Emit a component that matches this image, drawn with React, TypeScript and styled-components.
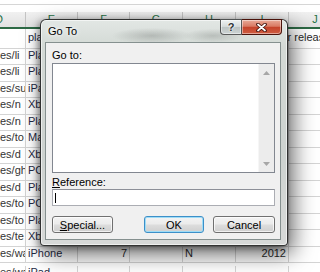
import React from "react";
import styled, { createGlobalStyle } from "styled-components";

interface SheetRow {
  a: string;
  d: string;
  e?: string;
  g?: string;
  h?: string;
  tall?: boolean;
}

const rows: SheetRow[] = [
  { a: "", d: "pla", h: "digital year released", tall: true },
  { a: "es/li", d: "PlayStation 3" },
  { a: "es/li", d: "PlayStation 3" },
  { a: "es/su", d: "iPad" },
  { a: "es/n", d: "Xbox 360" },
  { a: "es/n", d: "PlayStation 3" },
  { a: "es/to", d: "Mac" },
  { a: "es/d", d: "Xbox 360" },
  { a: "es/gh", d: "PC" },
  { a: "es/d", d: "PlayStation 3" },
  { a: "es/to", d: "PC" },
  { a: "es/to", d: "PlayStation 3" },
  { a: "es/te", d: "Xbox 360" },
  { a: "es/wa", d: "iPhone", e: "7", g: "N", h: "2012" },
  { a: "es/wa", d: "iPad" },
];

const COLS = "26px 52px 52px 53px 53px 53px 53px";
const UI_FONT = `"Liberation Sans Narrow", "Liberation Sans", Arial, sans-serif`;

const GlobalStyle = createGlobalStyle`
  html, body { margin: 0; padding: 0; background: #fff; }
  body { width: 320px; height: 272px; overflow: hidden; }
`;

const Sheet = styled.div`
  position: relative;
  width: 320px;
  height: 272px;
  overflow: hidden;
  background: #fff;
  font-family: "Liberation Sans", Arial, sans-serif;
  font-size: 11px;
  color: #222;
`;

const FormulaEdge = styled.div`
  height: 4px;
  border-bottom: 1px solid #d6d6d6;
  margin-bottom: 7px;
`;

const HeaderRow = styled.div`
  display: grid;
  grid-template-columns: ${COLS};
  height: 17px;
  box-sizing: border-box;
  background: linear-gradient(#f1f1f1, #e1e1e1);
  border-bottom: 2px solid #2d6a45;
`;

const HeaderCell = styled.div<{ $cut?: boolean }>`
  min-width: 0;
  overflow: hidden;
  border-right: 1px solid #c4c4c4;
  line-height: 15px;
  text-align: ${(p) => (p.$cut ? "left" : "center")};
  text-indent: ${(p) => (p.$cut ? "-5px" : "0")};
  color: #1d7044;
`;

const Row = styled.div<{ $tall?: boolean; $last?: boolean }>`
  display: grid;
  grid-template-columns: ${COLS};
  height: ${(p) => (p.$tall ? 19.5 : 16.5)}px;
  box-sizing: border-box;
  border-bottom: 1px solid #d4d4d4;
  padding-top: ${(p) => (p.$last ? 3 : 0)}px;
`;

const Cell = styled.div<{ $right?: boolean; $clip?: boolean; $ink?: string }>`
  min-width: 0;
  display: flex;
  align-items: center;
  justify-content: ${(p) => (p.$right ? "flex-end" : "flex-start")};
  padding: ${(p) => (p.$clip ? "0 0 3px 0" : "0 2px 3px 2px")};
  border-right: 1px solid #d4d4d4;
  white-space: nowrap;
  overflow: ${(p) => (p.$clip ? "hidden" : "visible")};
  color: ${(p) => p.$ink || "#2a2a2a"};
`;

/* dialog */

const Dialog = styled.div`
  position: absolute;
  left: 40px;
  top: 19px;
  width: 248px;
  height: 227px;
  box-sizing: border-box;
  display: flex;
  flex-direction: column;
  padding: 0 6px 5px 4px;
  border: 1px solid rgba(20, 20, 20, 0.85);
  border-radius: 6px 6px 4px 4px;
  background:
    radial-gradient(ellipse 40px 8px at 45% 7%, rgba(110, 115, 112, 0.35), transparent),
    radial-gradient(ellipse 30px 7px at 70% 7%, rgba(110, 115, 112, 0.3), transparent),
    linear-gradient(#e2e7e4, #d3d9d5 12%, #cdd2cf 60%, #d7d9d8);
  box-shadow:
    5px 8px 22px rgba(0, 0, 0, 0.6),
    -2px 2px 6px rgba(0, 0, 0, 0.35),
    inset 0 0 0 1px rgba(255, 255, 255, 0.6);
  font-family: ${UI_FONT};
  font-size: 11px;
  color: #000;
`;

const TitleBar = styled.div`
  height: 22px;
  display: flex;
  align-items: center;
  padding-left: 3px;
`;

const Title = styled.div`
  text-shadow: 0 0 6px #fff, 0 0 3px #fff;
`;

const Captions = styled.div`
  margin-left: auto;
  margin-right: -1px;
  align-self: flex-start;
  margin-top: -1px;
  display: flex;
  height: 16px;
`;

const CaptionBtn = styled.div<{ $close?: boolean }>`
  width: ${(p) => (p.$close ? 40 : 22)}px;
  height: 16px;
  box-sizing: border-box;
  display: flex;
  align-items: center;
  justify-content: center;
  border: 1px solid ${(p) => (p.$close ? "#4a130b" : "rgba(40,40,40,0.75)")};
  border-left-width: ${(p) => (p.$close ? 0 : 1)}px;
  border-radius: ${(p) => (p.$close ? "0 0 4px 0" : "0 0 0 4px")};
  background: ${(p) =>
    p.$close
      ? "linear-gradient(#e9aa98, #d97a63 45%, #c5432a 52%, #cf5e42)"
      : "linear-gradient(#eef2f2, #d4dada 48%, #bcc4c4 52%, #cdd4d4)"};
  box-shadow: inset 0 0 0 1px rgba(255, 255, 255, 0.45);
  font-family: "Liberation Sans", Arial, sans-serif;
  font-weight: bold;
  font-size: 11px;
  color: #2d3336;
  text-shadow: 0 0 2px #fff, 0 0 2px #fff;
`;

const Client = styled.div`
  flex: 1;
  display: flex;
  flex-direction: column;
  background: #f0f0f0;
  border: 1px solid #85908f;
  padding: 5px 5px 6px 6px;
`;

const Label = styled.div<{ $gap?: number }>`
  line-height: ${(p) => (p.$gap ? 13 : 14)}px;
  margin-top: ${(p) => p.$gap || 0}px;
`;

const ListBox = styled.div`
  margin-top: 1px;
  height: 110px;
  box-sizing: border-box;
  border: 1px solid #828790;
  background: #fff;
  display: flex;
  justify-content: flex-end;
`;

const ScrollBar = styled.div`
  width: 15px;
  display: flex;
  flex-direction: column;
  justify-content: space-between;
  background: #ececec;
  border-left: 1px solid #f6f6f6;
`;

const ArrowBox = styled.div`
  height: 17px;
  display: flex;
  align-items: center;
  justify-content: center;
`;

const Input = styled.div`
  height: 17px;
  box-sizing: border-box;
  border: 1px solid #abadb3;
  border-top-color: #8d9098;
  background: #fff;
  display: flex;
  align-items: center;
`;

const Caret = styled.div`
  width: 1px;
  height: 10px;
  margin-left: 2px;
  background: #000;
`;

const Buttons = styled.div`
  margin-top: 10px;
  display: flex;
  gap: 9px;
`;

const Button = styled.div<{ $w: number; $default?: boolean; $push?: boolean }>`
  width: ${(p) => p.$w}px;
  height: 17px;
  box-sizing: border-box;
  margin-right: ${(p) => (p.$push ? "auto" : "0")};
  display: flex;
  align-items: center;
  justify-content: center;
  border: 1px solid ${(p) => (p.$default ? "#3c8fc8" : "#707070")};
  border-radius: 3px;
  background: linear-gradient(#f3f3f3, #ebebeb 48%, #dddddd 52%, #cfcfcf);
  box-shadow: inset 0 0 0 1px ${(p) => (p.$default ? "#9fdcf6" : "rgba(255,255,255,0.7)")};
`;

const Arrow = ({ up }: { up?: boolean }) => (
  <svg width="7" height="4" viewBox="0 0 7 4">
    <polygon points={up ? "3.5,0 7,4 0,4" : "0,0 7,0 3.5,4"} fill="#a6a6a6" />
  </svg>
);

const CloseGlyph = () => (
  <svg width="11" height="9" viewBox="0 0 11 9">
    <path d="M2 1.5 L9 7.5 M9 1.5 L2 7.5" stroke="#3c0f08" strokeWidth="3.6" strokeLinecap="round" />
    <path d="M2 1.5 L9 7.5 M9 1.5 L2 7.5" stroke="#fff" strokeWidth="1.8" strokeLinecap="round" />
  </svg>
);

const headers = ["D", "E", "F", "G", "H", "I", "J"];

export default function App() {
  return (
    <>
      <GlobalStyle />
      <Sheet>
        <FormulaEdge />
        <HeaderRow>
          {headers.map((h, i) => (
            <HeaderCell key={h} $cut={i === 0}>
              {h}
            </HeaderCell>
          ))}
        </HeaderRow>
        {rows.map((r, i) => (
          <Row key={i} $tall={r.tall} $last={i === rows.length - 1}>
            <Cell $clip $ink="#333">{r.a}</Cell>
            <Cell $ink="#1f2a44">{r.d}</Cell>
            <Cell $right>{r.e}</Cell>
            <Cell />
            <Cell>{r.g}</Cell>
            <Cell $right={!r.tall}>{r.h}</Cell>
            <Cell />
          </Row>
        ))}

        <Dialog role="dialog" aria-label="Go To">
          <TitleBar>
            <Title>Go To</Title>
            <Captions>
              <CaptionBtn>?</CaptionBtn>
              <CaptionBtn $close>
                <CloseGlyph />
              </CaptionBtn>
            </Captions>
          </TitleBar>
          <Client>
            <Label>Go to:</Label>
            <ListBox>
              <ScrollBar>
                <ArrowBox>
                  <Arrow up />
                </ArrowBox>
                <ArrowBox>
                  <Arrow />
                </ArrowBox>
              </ScrollBar>
            </ListBox>
            <Label $gap={3}>
              <u>R</u>eference:
            </Label>
            <Input>
              <Caret />
            </Input>
            <Buttons>
              <Button $w={61} $push>
                <span>
                  <u>S</u>pecial...
                </span>
              </Button>
              <Button $w={60} $default>
                OK
              </Button>
              <Button $w={62}>Cancel</Button>
            </Buttons>
          </Client>
        </Dialog>
      </Sheet>
    </>
  );
}
